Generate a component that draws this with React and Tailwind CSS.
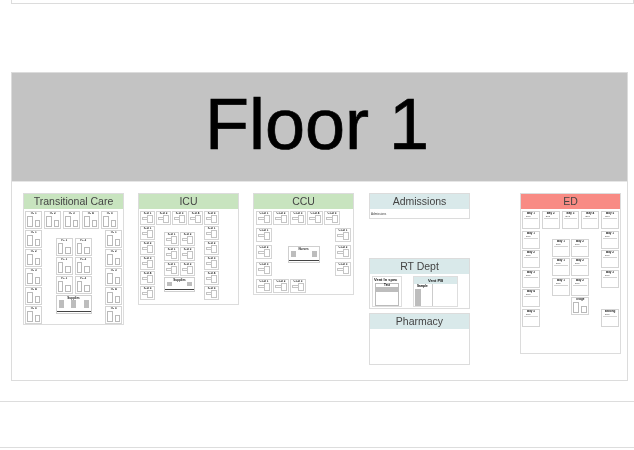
// --- Components ---

function Room({ kind = "split", label = "Room", className = "" }) {
  return (
    <div className={`flex flex-col items-center border border-[#d4d4d4] bg-white overflow-hidden ${className}`}>
      <span className="text-[3px] leading-[3px] font-bold text-[#222] whitespace-nowrap">{label}</span>
      {kind === "split" && (
        <div className="flex flex-1 w-full gap-[2px] px-[1px] pb-[1px] pt-[1px]">
          <div className="flex-1 border border-[#b9b9b9]" />
          <div className="flex-1 border border-[#b9b9b9] mt-[4px]" />
        </div>
      )}
      {kind === "cross" && (
        <div className="flex flex-1 w-full px-[1px] pb-[1px]">
          <div className="flex-1 border-y border-l border-[#c4c4c4] mt-[2px] mb-[3px]" />
          <div className="flex-1 border border-[#c4c4c4]" />
        </div>
      )}
      {kind === "box" && (
        <div className="flex flex-col flex-1 w-full px-[1px] pb-[1px]">
          <span className="text-[2.5px] leading-[3px] text-[#555] pl-[2px]">Bed</span>
          <div className="flex-1 border-t border-[#d4d4d4]" />
        </div>
      )}
    </div>
  )
}

function Supply({ className = "", cols = 3, title = "Supplies" }) {
  return (
    <div className={`flex flex-col items-center border border-[#cfcfcf] bg-white ${className}`}>
      <span className="text-[3px] leading-[4px] font-bold text-[#222]">{title}</span>
      <div className="flex flex-1 w-full justify-between px-[2px]">
        {Array.from({ length: cols }).map((_, i) => (
          <div key={i} className="w-[5px] bg-[#bdbdbd] mb-[3px]" />
        ))}
      </div>
      <div className="w-full h-[1px] bg-[#444] mb-[1px]" />
    </div>
  )
}

function Unit({ title, headerClass, className = "", children }) {
  return (
    <section className={`flex flex-col w-[101px] border border-[#dcdcdc] bg-white ${className}`}>
      <h2 className={`h-[15px] shrink-0 flex items-center justify-center text-[10.5px] leading-none font-normal text-[#444] ${headerClass}`}>
        {title}
      </h2>
      {children}
    </section>
  )
}

function Column({ count, kind, size, gap, label }) {
  return (
    <div className={`flex flex-col ${gap}`}>
      {Array.from({ length: count }).map((_, i) => (
        <Room key={i} kind={kind} className={size} label={`${label} ${i + 1}`} />
      ))}
    </div>
  )
}

function RoomRow({ count, kind, size, gap, label, className = "" }) {
  return (
    <div className={`flex ${gap} ${className}`}>
      {Array.from({ length: count }).map((_, i) => (
        <Room key={i} kind={kind} className={size} label={`${label} ${i + 1}`} />
      ))}
    </div>
  )
}

function TransitionalCare() {
  const size = "w-[17px] h-[18px]"
  return (
    <Unit title="Transitional Care" headerClass="bg-[#c8e4bf]" className="h-[132px]">
      <div className="flex flex-col gap-[1px] px-[1px] pt-[2px]">
        <RoomRow count={5} kind="split" size={size} gap="gap-[2px]" label="TC" />
        <div className="flex justify-between">
          <Column count={5} kind="split" size={size} gap="gap-[1px]" label="TC" />
          <div className="flex flex-col gap-[1px] pt-[8px]">
            {[0, 1, 2].map((i) => (
              <RoomRow key={i} count={2} kind="split" size={size} gap="gap-[2px]" label="TC" />
            ))}
            <Supply className="w-[36px] h-[19px]" />
          </div>
          <Column count={5} kind="split" size={size} gap="gap-[1px]" label="TC" />
        </div>
      </div>
    </Unit>
  )
}

function Icu() {
  const size = "w-[15px] h-[14px]"
  return (
    <Unit title="ICU" headerClass="bg-[#c8e4bf]" className="h-[112px]">
      <div className="flex flex-col gap-[1px] w-[80px] pl-[1px] pt-[2px]">
        <RoomRow count={5} kind="cross" size={size} gap="gap-[1px]" label="ICU" />
        <div className="flex justify-between">
          <Column count={5} kind="cross" size={size} gap="gap-[1px]" label="ICU" />
          <div className="flex flex-col gap-[1px] pt-[6px]">
            {[0, 1, 2].map((i) => (
              <RoomRow key={i} count={2} kind="cross" size={size} gap="gap-[1px]" label="ICU" />
            ))}
            <Supply className="w-[31px] h-[15px]" cols={2} />
          </div>
          <Column count={5} kind="cross" size={size} gap="gap-[1px]" label="ICU" />
        </div>
      </div>
    </Unit>
  )
}

function Ccu() {
  const size = "w-[16px] h-[14px]"
  return (
    <Unit title="CCU" headerClass="bg-[#c8e4bf]" className="h-[102px]">
      <div className="flex flex-col px-[2px] pt-[2px]">
        <RoomRow count={5} kind="cross" size={size} gap="gap-[1px]" label="CCU" />
        <div className="flex justify-between mt-[3px]">
          <Column count={3} kind="cross" size={size} gap="gap-[3px]" label="CCU" />
          <Supply className="w-[32px] h-[17px] mt-[18px]" cols={2} title="Nurses" />
          <Column count={3} kind="cross" size={size} gap="gap-[3px]" label="CCU" />
        </div>
        <RoomRow count={3} kind="cross" size={size} gap="gap-[1px]" label="CCU" className="mt-[3px]" />
      </div>
    </Unit>
  )
}

function SupportUnits() {
  return (
    <div className="flex flex-col w-[101px]">
      <Unit title="Admissions" headerClass="bg-[#d9e9ea]" className="h-[26px]">
        <span className="text-[3px] leading-[4px] text-[#444] pl-[1px] pt-[3px]">Admissions</span>
      </Unit>
      <Unit title="RT Dept" headerClass="bg-[#d9e9ea]" className="h-[51px] mt-[39px]">
        <div className="flex flex-1 pl-[2px] pt-[2px] pb-[1px]">
          <div className="flex flex-col w-[30px] border border-[#dedede]">
            <span className="text-[4px] leading-[6px] font-bold text-[#111] whitespace-nowrap pl-[1px]">Vent In spec</span>
            <div className="flex flex-col mx-[2px] flex-1 border border-[#bbb]">
              <span className="text-[3px] leading-[3px] text-center font-bold">Test</span>
              <div className="h-[5px] bg-[#bdbdbd]" />
            </div>
          </div>
          <div className="flex flex-col w-[45px] ml-[11px] border border-[#dedede]">
            <span className="h-[7px] bg-[#d9e9ea] text-[4px] leading-[7px] font-bold text-center text-[#111]">Vent PB</span>
            <div className="flex flex-col w-[18px] ml-[1px] flex-1 border-r border-[#ccc]">
              <span className="text-[3px] leading-[5px] font-bold pl-[2px]">Sample</span>
              <div className="w-[6px] flex-1 bg-[#bdbdbd]" />
            </div>
          </div>
        </div>
      </Unit>
      <Unit title="Pharmacy" headerClass="bg-[#d9e9ea]" className="h-[52px] mt-[4px]" />
    </div>
  )
}

function Ed() {
  const size = "w-[18px] h-[18px]"
  return (
    <Unit title="ED" headerClass="bg-[#f88b84]" className="w-[100px] h-[161px]">
      <div className="flex flex-col gap-[1.5px] px-[1px] pt-[2px]">
        <RoomRow count={5} kind="box" size={size} gap="gap-[2px]" label="Bay" />
        <div className="flex justify-between">
          <Column count={5} kind="box" size={size} gap="gap-[1.5px]" label="Bay" />
          <div className="flex flex-col gap-[1.5px] pt-[8px]">
            {[0, 1, 2].map((i) => (
              <RoomRow key={i} count={2} kind="box" size={size} gap="gap-[1px]" label="Bay" />
            ))}
            <div className="flex justify-end">
              <Room kind="split" className={size} label="Triage" />
            </div>
          </div>
          <div className="flex flex-col gap-[1.5px]">
            <Column count={3} kind="box" size={size} gap="gap-[1.5px]" label="Bay" />
            <Room kind="box" className={`${size} mt-[20px]`} label="Waiting" />
          </div>
        </div>
      </div>
    </Unit>
  )
}

export default function App() {
  return (
    <div className="relative w-[634px] h-[450px] overflow-hidden bg-white blur-[0.4px] font-['Liberation_Sans',Arial,sans-serif]">
      <div className="ml-[11px] h-[4px] border-x border-b border-[#dcdcdc]" />

      <div className="flex flex-col ml-[11px] mt-[68px] w-[617px] h-[309px] border border-[#dcdcdc]">
        <h1 className="h-[108px] shrink-0 flex items-center justify-center bg-[#c3c3c3] text-[72px] leading-none font-normal text-black pr-[5px] pb-[6px] [-webkit-text-stroke:0.7px_black]">
          Floor 1
        </h1>
        <div className="flex items-start pl-[11px] pt-[11px] border-t border-[#e6e6e6]">
          <TransitionalCare />
          <div className="ml-[14px]"><Icu /></div>
          <div className="ml-[14px]"><Ccu /></div>
          <div className="ml-[15px]"><SupportUnits /></div>
          <div className="ml-[50px]"><Ed /></div>
        </div>
      </div>

      <div className="mt-[20px] h-[47px] border-y border-[#dddddd]" />
    </div>
  )
}
